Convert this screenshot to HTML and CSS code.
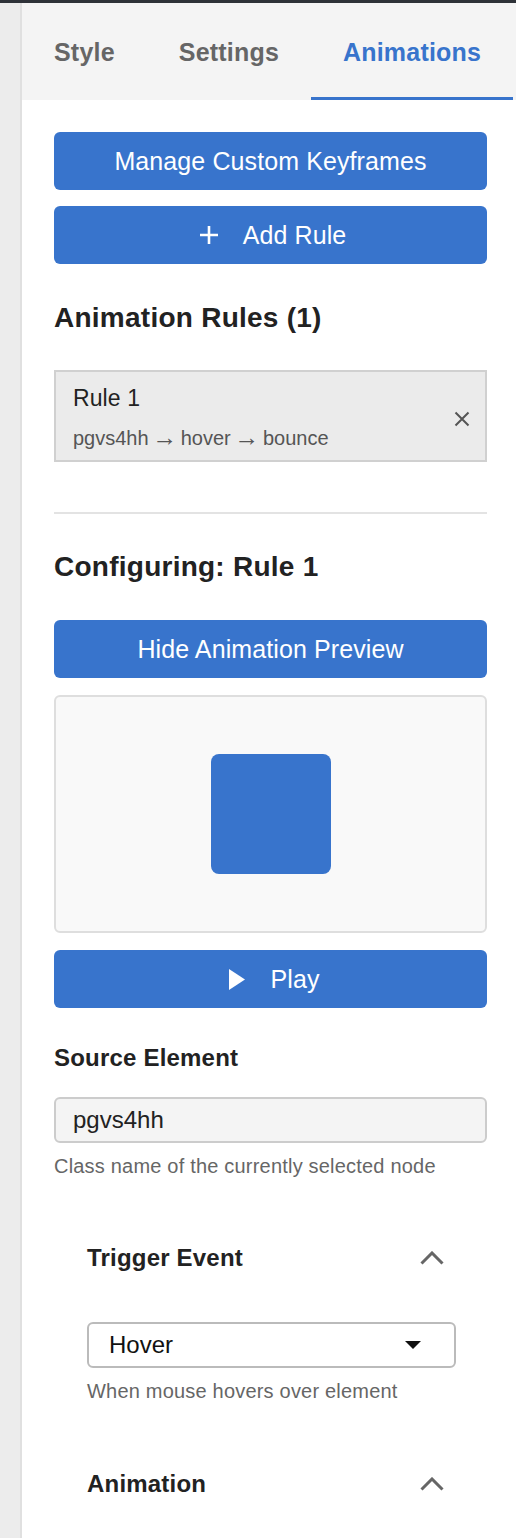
FILE: index.html
```html
<!DOCTYPE html>
<html>
<head>
<meta charset="utf-8">
<link rel="stylesheet" href="styles.css">
</head>
<body>
<div class="topbar"></div>
<div class="layout">
  <div class="rail"></div>
  <div class="panel">
    <div class="tabs">
      <div class="tab">Style</div>
      <div class="tab">Settings</div>
      <div class="tab active">Animations</div>
    </div>
    <div class="content">
      <button class="btn">Manage Custom Keyframes</button>
      <button class="btn btn-gap">
        <svg class="ic-plus" width="22" height="22" viewBox="0 0 22 22"><path d="M11 2v18M2 11h18" stroke="#fff" stroke-width="2.6" fill="none"/></svg>
        <span>Add Rule</span>
      </button>

      <h2 class="h-rules">Animation Rules (1)</h2>
      <div class="rule-card">
        <div class="rule-text">
          <div class="rule-title">Rule 1</div>
          <div class="rule-sub">pgvs4hh <span class="arrow">→</span> hover <span class="arrow">→</span> bounce</div>
        </div>
        <svg class="ic-close" width="16" height="16" viewBox="0 0 16 16"><path d="M1.5 1.5l13 13M14.5 1.5l-13 13" stroke="#555" stroke-width="2" fill="none"/></svg>
      </div>

      <div class="divider"></div>

      <h2 class="h-config">Configuring: Rule 1</h2>
      <button class="btn">Hide Animation Preview</button>
      <div class="preview"><div class="square"></div></div>
      <button class="btn btn-play">
        <svg width="16" height="21" viewBox="0 0 16 21"><polygon points="0,0 16,10.5 0,21" fill="#fff"/></svg>
        <span>Play</span>
      </button>

      <div class="label label-source">Source Element</div>
      <div class="input">pgvs4hh</div>
      <div class="help">Class name of the currently selected node</div>

      <div class="section">
        <div class="sec-head sec-trigger">
          <span class="label">Trigger Event</span>
          <svg class="chev" width="24" height="14" viewBox="0 0 24 14"><path d="M1.5 12.5L12 2l10.5 10.5" stroke="#666" stroke-width="3" fill="none"/></svg>
        </div>
        <div class="select">
          <span>Hover</span>
          <svg width="16" height="8" viewBox="0 0 16 8"><polygon points="0,0 16,0 8,8" fill="#111"/></svg>
        </div>
        <div class="help">When mouse hovers over element</div>

        <div class="sec-head sec-anim">
          <span class="label">Animation</span>
          <svg class="chev" width="24" height="14" viewBox="0 0 24 14"><path d="M1.5 12.5L12 2l10.5 10.5" stroke="#666" stroke-width="3" fill="none"/></svg>
        </div>
      </div>
    </div>
  </div>
</div>
</body>
</html>
```

FILE: styles.css
```css
* { box-sizing: border-box; }
html, body { margin: 0; padding: 0; }
body {
  font-family: "Liberation Sans", Arial, sans-serif;
  background: #fff;
  color: #222;
  width: 516px;
  height: 1538px;
  overflow: hidden;
}
.topbar { height: 3px; background: #2e3238; }
.layout { display: flex; height: 1535px; }
.rail {
  width: 22px;
  flex: none;
  background: #ececec;
  border-right: 2px solid #e0e0e0;
}
.panel { flex: 1; background: #fff; }
.tabs {
  display: flex;
  height: 97px;
  background: #f4f4f4;
}
.tab {
  display: flex;
  align-items: center;
  padding: 4px 32px 0;
  font-size: 25px;
  font-weight: 700;
  letter-spacing: 0.2px;
  color: #666;
  border-bottom: 3px solid transparent;
}
.tab.active { color: #3874cc; border-bottom-color: #3874cc; }

.content { padding: 32px 29px 0 32px; display: flex; flex-direction: column; }

.btn {
  display: flex;
  align-items: center;
  justify-content: center;
  height: 58px;
  width: 100%;
  border: none;
  border-radius: 6px;
  background: #3874cc;
  color: #fff;
  font-family: inherit;
  font-size: 25px;
  letter-spacing: 0.1px;
  padding: 0;
}
.btn-gap { margin-top: 16px; gap: 23px; padding-left: 3px; }
.btn-play { margin-top: 17px; gap: 25px; padding-left: 8px; }

.h-rules, .h-config {
  margin: 0;
  font-size: 28px;
  line-height: 34px;
  font-weight: 700;
  letter-spacing: 0.25px;
  color: #222;
}
.h-rules { margin-top: 37px; }
.h-config { margin-top: 36px; margin-bottom: 36px; }

.rule-card {
  margin-top: 35px;
  height: 92px;
  background: #ebebeb;
  border: 2px solid #d0d0d0;
  padding: 12px 15px 0 17px;
  display: flex;
  justify-content: space-between;
  align-items: flex-start;
}
.rule-title { font-size: 23px; line-height: 28px; color: #222; letter-spacing: 0.1px; }
.rule-sub { margin-top: 14px; font-size: 20px; line-height: 24px; color: #555; }
.arrow {
  display: inline-block;
  font-size: 25px;
  line-height: 20px;
  margin: 0 -2px;
  vertical-align: -1px;
}
.ic-close { margin-top: 27px; }

.divider { margin-top: 50px; height: 2px; background: #e3e3e3; }

.preview {
  margin-top: 17px;
  height: 238px;
  border: 2px solid #dedede;
  border-radius: 6px;
  background: #f9f9f9;
  display: flex;
  align-items: center;
  justify-content: center;
}
.square { width: 120px; height: 120px; border-radius: 8px; background: #3874cc; }

.label { font-size: 24px; line-height: 29px; font-weight: 700; letter-spacing: 0.2px; color: #222; }
.label-source { margin-top: 35px; }
.input {
  margin-top: 25px;
  height: 46px;
  border: 2px solid #cccccc;
  border-radius: 6px;
  background: #f4f4f4;
  padding-left: 17px;
  display: flex;
  align-items: center;
  font-size: 24px;
  color: #222;
}
.help { margin-top: 11px; font-size: 20px; line-height: 24px; letter-spacing: 0.2px; color: #666; }

.section { padding: 0 31px 0 33px; display: flex; flex-direction: column; }
.sec-head { display: flex; justify-content: space-between; align-items: center; }
.sec-head .chev { margin-right: 12px; }
.sec-trigger { margin-top: 65px; }
.sec-anim { margin-top: 66px; }
.select {
  margin-top: 50px;
  height: 46px;
  border: 2px solid #bbbbbb;
  border-radius: 6px;
  background: #fff;
  display: flex;
  align-items: center;
  justify-content: space-between;
  padding: 0 33px 0 20px;
  font-size: 24px;
  color: #111;
}
```
